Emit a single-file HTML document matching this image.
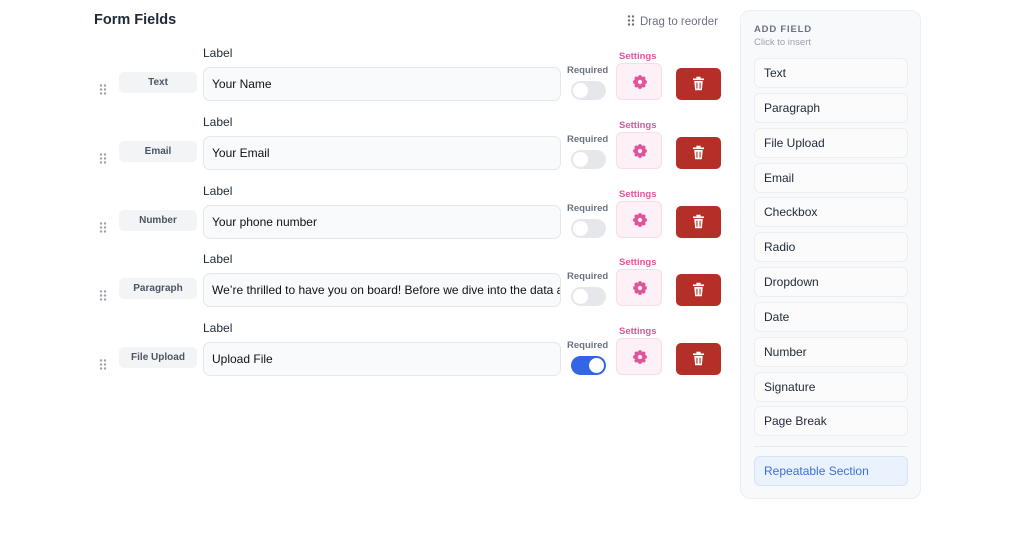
<!DOCTYPE html>
<html><head><style>
*{box-sizing:border-box;margin:0;padding:0}
body{width:1024px;height:554px;background:#fff;font-family:"Liberation Sans",sans-serif;position:relative;overflow:hidden;color:#1f2937}
.a{position:absolute}
h1{position:absolute;left:94px;top:12px;font-size:14.5px;font-weight:bold;color:#1f2937}
.lbl{font-size:12px;color:#1f2937}
.inp{background:#f9fafb;border:1px solid #e5e7eb;border-radius:7px;width:358px;height:34px;font-size:12px;padding:0 8px;line-height:32px;white-space:nowrap;overflow:hidden;color:#111}
.badge{width:78px;height:21px;background:#f3f4f6;border-radius:5px;font-size:10px;color:#4b5563;text-align:center;line-height:21px;font-weight:bold}
.req{font-size:9.5px;color:#6b7280;font-weight:bold}
.tg{width:35px;height:19px;border-radius:10px;background:#e5e7eb}
.tg i{position:absolute;top:2px;left:2px;width:15px;height:15px;border-radius:50%;background:#fff}
.tg.on{background:#3366e6}.tg.on i{left:18px}
.set{font-size:9.5px;color:#e0559a;font-weight:bold}
.sbox{width:46px;height:37px;background:#fdf0f6;border:1px solid #fadbe9;border-radius:6px}
.del{width:45px;height:32px;background:#b42f28;border-radius:5px}
.dots{width:8px;height:11px}
.side{left:740px;top:10px;width:181px;height:489px;background:#f8f9fb;border:1px solid #eceef2;border-radius:10px}
.it{left:754px;width:154px;height:30px;border:1px solid #eceef2;border-radius:6px;font-size:12px;padding-left:9px;line-height:28px;color:#1f2937;background:#fbfbfc}
</style></head><body>
<h1>Form Fields</h1>
<div class="a" style="left:627px;top:15px;font-size:11.5px;color:#6b7280"><svg width="8" height="11" style="vertical-align:-1px;margin-right:5px"><g fill="#6b7280"><circle cx="2" cy="1.5" r="1.2"/><circle cx="6" cy="1.5" r="1.2"/><circle cx="2" cy="5.5" r="1.2"/><circle cx="6" cy="5.5" r="1.2"/><circle cx="2" cy="9.5" r="1.2"/><circle cx="6" cy="9.5" r="1.2"/></g></svg>Drag to reorder</div>

<div class="a" style="left:0;top:0">
<div class="a lbl" style="left:203px;top:46px">Label</div>
<div class="a dots" style="left:99px;top:82px"><svg width="8" height="11"><g fill="#9ca3af"><circle cx="2" cy="1.5" r="1.2"/><circle cx="6" cy="1.5" r="1.2"/><circle cx="2" cy="5.5" r="1.2"/><circle cx="6" cy="5.5" r="1.2"/><circle cx="2" cy="9.5" r="1.2"/><circle cx="6" cy="9.5" r="1.2"/></g></svg></div>
<div class="a badge" style="left:119px;top:72px">Text</div>
<div class="a inp" style="left:203px;top:67px">Your Name</div>
<div class="a req" style="left:567px;top:65px">Required</div>
<div class="a tg" style="left:571px;top:81px"><i></i></div>
<div class="a set" style="left:619px;top:51px">Settings</div>
<div class="a sbox" style="left:616px;top:63px"><svg class="a" style="left:15px;top:10px" width="16" height="16" viewBox="0 0 18 18"><g fill="#e0559a"><circle cx="9" cy="9" r="5.8"/><circle cx="9" cy="3.4" r="2.2"/><circle cx="9" cy="14.6" r="2.2"/><circle cx="3.4" cy="9" r="2.2"/><circle cx="14.6" cy="9" r="2.2"/><circle cx="5" cy="5" r="2.2"/><circle cx="13" cy="5" r="2.2"/><circle cx="5" cy="13" r="2.2"/><circle cx="13" cy="13" r="2.2"/></g><circle cx="9" cy="9" r="2.4" fill="#fdf0f6"/></svg></div>
<div class="a del" style="left:676px;top:68px"><svg class="a" style="left:17px;top:8px" width="11" height="15" viewBox="0 0 13 16"><rect x="0" y="2" width="13" height="2" fill="#fff"/><rect x="4" y="0" width="5" height="2" fill="#fff"/><path d="M1.5 5h10l-1 11h-8z" fill="#fff"/><rect x="4" y="7" width="1.3" height="7" fill="#b42f28"/><rect x="7.7" y="7" width="1.3" height="7" fill="#b42f28"/></svg></div>
</div>

<div class="a" style="left:0;top:69px">
<div class="a lbl" style="left:203px;top:46px">Label</div>
<div class="a dots" style="left:99px;top:82px"><svg width="8" height="11"><g fill="#9ca3af"><circle cx="2" cy="1.5" r="1.2"/><circle cx="6" cy="1.5" r="1.2"/><circle cx="2" cy="5.5" r="1.2"/><circle cx="6" cy="5.5" r="1.2"/><circle cx="2" cy="9.5" r="1.2"/><circle cx="6" cy="9.5" r="1.2"/></g></svg></div>
<div class="a badge" style="left:119px;top:72px">Email</div>
<div class="a inp" style="left:203px;top:67px">Your Email</div>
<div class="a req" style="left:567px;top:65px">Required</div>
<div class="a tg" style="left:571px;top:81px"><i></i></div>
<div class="a set" style="left:619px;top:51px">Settings</div>
<div class="a sbox" style="left:616px;top:63px"><svg class="a" style="left:15px;top:10px" width="16" height="16" viewBox="0 0 18 18"><g fill="#e0559a"><circle cx="9" cy="9" r="5.8"/><circle cx="9" cy="3.4" r="2.2"/><circle cx="9" cy="14.6" r="2.2"/><circle cx="3.4" cy="9" r="2.2"/><circle cx="14.6" cy="9" r="2.2"/><circle cx="5" cy="5" r="2.2"/><circle cx="13" cy="5" r="2.2"/><circle cx="5" cy="13" r="2.2"/><circle cx="13" cy="13" r="2.2"/></g><circle cx="9" cy="9" r="2.4" fill="#fdf0f6"/></svg></div>
<div class="a del" style="left:676px;top:68px"><svg class="a" style="left:17px;top:8px" width="11" height="15" viewBox="0 0 13 16"><rect x="0" y="2" width="13" height="2" fill="#fff"/><rect x="4" y="0" width="5" height="2" fill="#fff"/><path d="M1.5 5h10l-1 11h-8z" fill="#fff"/><rect x="4" y="7" width="1.3" height="7" fill="#b42f28"/><rect x="7.7" y="7" width="1.3" height="7" fill="#b42f28"/></svg></div>
</div>

<div class="a" style="left:0;top:137.5px">
<div class="a lbl" style="left:203px;top:46px">Label</div>
<div class="a dots" style="left:99px;top:82px"><svg width="8" height="11"><g fill="#9ca3af"><circle cx="2" cy="1.5" r="1.2"/><circle cx="6" cy="1.5" r="1.2"/><circle cx="2" cy="5.5" r="1.2"/><circle cx="6" cy="5.5" r="1.2"/><circle cx="2" cy="9.5" r="1.2"/><circle cx="6" cy="9.5" r="1.2"/></g></svg></div>
<div class="a badge" style="left:119px;top:72px">Number</div>
<div class="a inp" style="left:203px;top:67px">Your phone number</div>
<div class="a req" style="left:567px;top:65px">Required</div>
<div class="a tg" style="left:571px;top:81px"><i></i></div>
<div class="a set" style="left:619px;top:51px">Settings</div>
<div class="a sbox" style="left:616px;top:63px"><svg class="a" style="left:15px;top:10px" width="16" height="16" viewBox="0 0 18 18"><g fill="#e0559a"><circle cx="9" cy="9" r="5.8"/><circle cx="9" cy="3.4" r="2.2"/><circle cx="9" cy="14.6" r="2.2"/><circle cx="3.4" cy="9" r="2.2"/><circle cx="14.6" cy="9" r="2.2"/><circle cx="5" cy="5" r="2.2"/><circle cx="13" cy="5" r="2.2"/><circle cx="5" cy="13" r="2.2"/><circle cx="13" cy="13" r="2.2"/></g><circle cx="9" cy="9" r="2.4" fill="#fdf0f6"/></svg></div>
<div class="a del" style="left:676px;top:68px"><svg class="a" style="left:17px;top:8px" width="11" height="15" viewBox="0 0 13 16"><rect x="0" y="2" width="13" height="2" fill="#fff"/><rect x="4" y="0" width="5" height="2" fill="#fff"/><path d="M1.5 5h10l-1 11h-8z" fill="#fff"/><rect x="4" y="7" width="1.3" height="7" fill="#b42f28"/><rect x="7.7" y="7" width="1.3" height="7" fill="#b42f28"/></svg></div>
</div>

<div class="a" style="left:0;top:206px">
<div class="a lbl" style="left:203px;top:46px">Label</div>
<div class="a dots" style="left:99px;top:82px"><svg width="8" height="11"><g fill="#9ca3af"><circle cx="2" cy="1.5" r="1.2"/><circle cx="6" cy="1.5" r="1.2"/><circle cx="2" cy="5.5" r="1.2"/><circle cx="6" cy="5.5" r="1.2"/><circle cx="2" cy="9.5" r="1.2"/><circle cx="6" cy="9.5" r="1.2"/></g></svg></div>
<div class="a badge" style="left:119px;top:72px">Paragraph</div>
<div class="a inp" style="left:203px;top:67px">We’re thrilled to have you on board! Before we dive into the data and</div>
<div class="a req" style="left:567px;top:65px">Required</div>
<div class="a tg" style="left:571px;top:81px"><i></i></div>
<div class="a set" style="left:619px;top:51px">Settings</div>
<div class="a sbox" style="left:616px;top:63px"><svg class="a" style="left:15px;top:10px" width="16" height="16" viewBox="0 0 18 18"><g fill="#e0559a"><circle cx="9" cy="9" r="5.8"/><circle cx="9" cy="3.4" r="2.2"/><circle cx="9" cy="14.6" r="2.2"/><circle cx="3.4" cy="9" r="2.2"/><circle cx="14.6" cy="9" r="2.2"/><circle cx="5" cy="5" r="2.2"/><circle cx="13" cy="5" r="2.2"/><circle cx="5" cy="13" r="2.2"/><circle cx="13" cy="13" r="2.2"/></g><circle cx="9" cy="9" r="2.4" fill="#fdf0f6"/></svg></div>
<div class="a del" style="left:676px;top:68px"><svg class="a" style="left:17px;top:8px" width="11" height="15" viewBox="0 0 13 16"><rect x="0" y="2" width="13" height="2" fill="#fff"/><rect x="4" y="0" width="5" height="2" fill="#fff"/><path d="M1.5 5h10l-1 11h-8z" fill="#fff"/><rect x="4" y="7" width="1.3" height="7" fill="#b42f28"/><rect x="7.7" y="7" width="1.3" height="7" fill="#b42f28"/></svg></div>
</div>

<div class="a" style="left:0;top:275px">
<div class="a lbl" style="left:203px;top:46px">Label</div>
<div class="a dots" style="left:99px;top:82px"><svg width="8" height="11"><g fill="#9ca3af"><circle cx="2" cy="1.5" r="1.2"/><circle cx="6" cy="1.5" r="1.2"/><circle cx="2" cy="5.5" r="1.2"/><circle cx="6" cy="5.5" r="1.2"/><circle cx="2" cy="9.5" r="1.2"/><circle cx="6" cy="9.5" r="1.2"/></g></svg></div>
<div class="a badge" style="left:119px;top:72px">File Upload</div>
<div class="a inp" style="left:203px;top:67px">Upload File</div>
<div class="a req" style="left:567px;top:65px">Required</div>
<div class="a tg on" style="left:571px;top:81px"><i></i></div>
<div class="a set" style="left:619px;top:51px">Settings</div>
<div class="a sbox" style="left:616px;top:63px"><svg class="a" style="left:15px;top:10px" width="16" height="16" viewBox="0 0 18 18"><g fill="#e0559a"><circle cx="9" cy="9" r="5.8"/><circle cx="9" cy="3.4" r="2.2"/><circle cx="9" cy="14.6" r="2.2"/><circle cx="3.4" cy="9" r="2.2"/><circle cx="14.6" cy="9" r="2.2"/><circle cx="5" cy="5" r="2.2"/><circle cx="13" cy="5" r="2.2"/><circle cx="5" cy="13" r="2.2"/><circle cx="13" cy="13" r="2.2"/></g><circle cx="9" cy="9" r="2.4" fill="#fdf0f6"/></svg></div>
<div class="a del" style="left:676px;top:68px"><svg class="a" style="left:17px;top:8px" width="11" height="15" viewBox="0 0 13 16"><rect x="0" y="2" width="13" height="2" fill="#fff"/><rect x="4" y="0" width="5" height="2" fill="#fff"/><path d="M1.5 5h10l-1 11h-8z" fill="#fff"/><rect x="4" y="7" width="1.3" height="7" fill="#b42f28"/><rect x="7.7" y="7" width="1.3" height="7" fill="#b42f28"/></svg></div>
</div>

<div class="a side"></div>
<div class="a" style="left:754px;top:24px;font-size:9.5px;font-weight:bold;letter-spacing:0.8px;color:#6b7280">ADD FIELD</div>
<div class="a" style="left:754px;top:37px;font-size:9.5px;color:#9ca3af">Click to insert</div>
<div class="a it" style="top:58px">Text</div>
<div class="a it" style="top:93px">Paragraph</div>
<div class="a it" style="top:128px">File Upload</div>
<div class="a it" style="top:163px">Email</div>
<div class="a it" style="top:197px">Checkbox</div>
<div class="a it" style="top:232px">Radio</div>
<div class="a it" style="top:267px">Dropdown</div>
<div class="a it" style="top:302px">Date</div>
<div class="a it" style="top:337px">Number</div>
<div class="a it" style="top:372px">Signature</div>
<div class="a it" style="top:406px">Page Break</div>
<div class="a" style="left:754px;top:446px;width:154px;height:1px;background:#e8eaee"></div>
<div class="a it" style="top:456px;background:#eaf2fe;border-color:#d5e4fb;color:#3b6fd8">Repeatable Section</div>
</body></html>
